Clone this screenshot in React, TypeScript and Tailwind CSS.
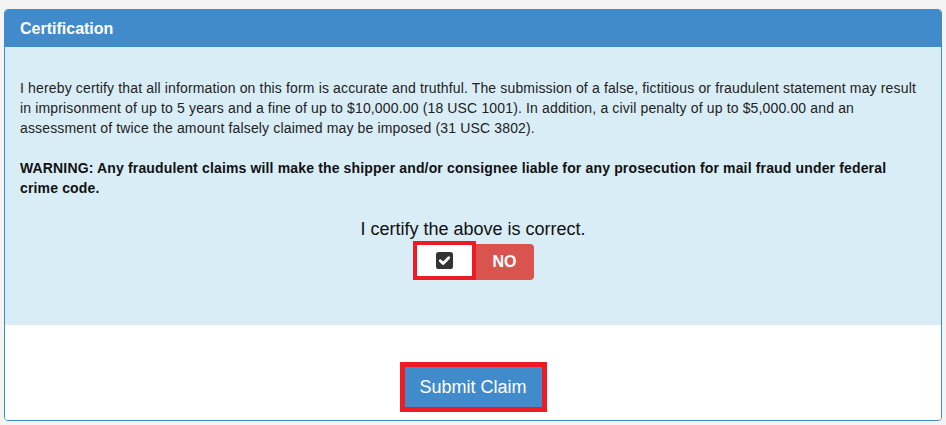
const App = () => {
  return (
    <div
      className="h-[425px] w-[946px] bg-[#f4f4f4] pt-[9px] pl-[4px] pr-[4px]"
      style={{ fontFamily: '"Liberation Sans", Arial, sans-serif' }}
    >
      <div className="border border-[#428bca] rounded-[4px] bg-white overflow-hidden">
        {/* Header */}
        <div className="h-[37px] bg-[#428bca] px-[15px] flex items-center">
          <h3 className="text-[16px] font-bold text-white">Certification</h3>
        </div>

        {/* Body */}
        <div className="bg-[#d9edf7] h-[278px] px-[15px] pt-[31px] text-[#222]">
          <p className="text-[14px] leading-[20px] tracking-[0.15px] whitespace-nowrap">
            I hereby certify that all information on this form is accurate and truthful. The submission of a false,
            fictitious or fraudulent statement may result
            <br />
            in imprisonment of up to 5 years and a fine of up to $10,000.00 (18 USC 1001). In addition, a civil penalty
            of up to $5,000.00 and an
            <br />
            assessment of twice the amount falsely claimed may be imposed (31 USC 3802).
          </p>
          <p className="mt-[20px] text-[14px] leading-[20px] tracking-[0.15px] font-bold text-[#111]">
            WARNING: Any fraudulent claims will make the shipper and/or consignee liable for any prosecution for mail
            fraud under federal crime code.
          </p>

          <div className="mt-[21px] flex flex-col items-center">
            <div className="text-[18px] leading-[20px] text-[#111]">I certify the above is correct.</div>
            <div className="mt-[2px] flex items-end">
              <div className="w-[63px] h-[39px] border-[4px] border-[#ed1c24] bg-white flex items-center justify-center">
                <svg width="17" height="17" viewBox="0 0 18 18">
                  <rect x="0" y="0" width="18" height="18" rx="3" fill="#333" />
                  <path d="M4.5 9.3 L7.5 12.2 L13.5 6.2" fill="none" stroke="#fff" strokeWidth="3" strokeLinecap="round" strokeLinejoin="round" />
                </svg>
              </div>
              <button className="w-[58px] h-[36px] bg-[#d9534f] rounded-r-[4px] text-white text-[16px] font-bold">
                NO
              </button>
            </div>
          </div>
        </div>

        {/* Footer */}
        <div className="h-[95px] bg-white flex justify-center pt-[37px]">
          <div className="h-[50px] border-[5px] border-[#ed1c24]">
            <button className="h-[40px] w-[137px] bg-[#428bca] text-white text-[18px]">Submit Claim</button>
          </div>
        </div>
      </div>
    </div>
  );
};

export default App;
